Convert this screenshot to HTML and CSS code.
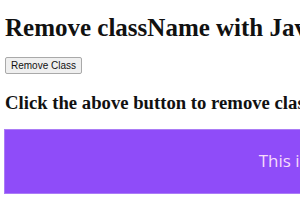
FILE: index.html
```html
<!doctype html>
<html lang="en">
<head>
    <meta charset="UTF-8">
    <title>Remove className</title>
    <link rel="stylesheet" href="styles.css">
</head>
<body>
    <h1>Remove className with JavaScript</h1>
    <button class="btn">Remove Class</button>
    <h3>Click the above button to remove className</h3>
    <div class="new-style">This is a DIV element.</div>
</body>
</html>
```
FILE: styles.css
```css
*{
    margin: 0;
    padding: 0;
}
html{
    overflow: hidden;
    background: #fff;
}
body{
    width: 678px;
    padding: 14px 4px 0 4px;
    font-family: "Liberation Serif", serif;
    color: #111;
    white-space: nowrap;
}
h1{
    font-size: 25px;
    line-height: 28px;
    padding-left: 1px;
}
.btn{
    display: block;
    margin-top: 15px;
    margin-left: 1px;
    font-family: "Liberation Sans", Arial, sans-serif;
    font-size: 10px;
    line-height: 13px;
    padding: 1px 5px;
    color: #111;
    background: #efefef;
    border: 1px solid #a9a9a9;
    border-radius: 2px;
}
h3{
    margin-top: 18px;
    font-size: 18.7px;
    line-height: 22px;
    padding-left: 1px;
}
.new-style{
    margin-top: 15px;
    height: 65px;
    box-sizing: border-box;
    padding-top: 20px;
    background-color: #8f4cf9;
    border: 1px solid #ab7cf6;
    color: #f6dcfb;
    font-family: "Open Sans", sans-serif;
    font-size: 17px;
    line-height: 22px;
    text-align: center;
}
```
